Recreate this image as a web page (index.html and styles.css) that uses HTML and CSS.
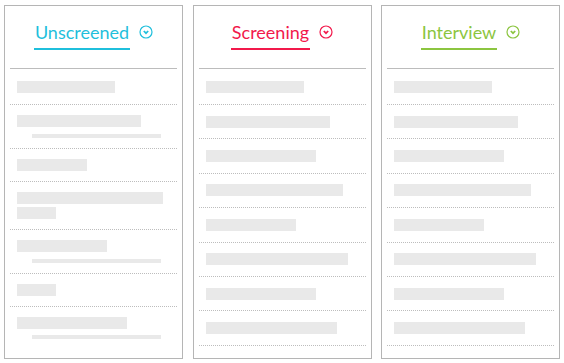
FILE: index.html
```html
<!DOCTYPE html>
<html lang="en">
<head>
    <meta charset="UTF-8">
    <title>Pipeline</title>
    <link rel="stylesheet" href="styles.css">
</head>
<body>
<div class="board">
    <div class="col unscreened">
        <div class="head">
            <div class="title">
                <span>Unscreened</span>
                <svg viewBox="0 0 14 14"><circle cx="7" cy="7" r="6"/><path d="M4.8 6 L7 8.2 L9.2 6"/></svg>
            </div>
        </div>
        <div class="row first"><i class="bar" style="width:98px"></i></div>
        <div class="row"><i class="bar" style="width:124px"></i><i class="sub"></i></div>
        <div class="row"><i class="bar" style="width:70px"></i></div>
        <div class="row"><i class="bar" style="width:146px"></i><i class="bar two" style="width:39px"></i></div>
        <div class="row"><i class="bar" style="width:90px"></i><i class="sub"></i></div>
        <div class="row"><i class="bar" style="width:39px"></i></div>
        <div class="row last"><i class="bar" style="width:110px"></i><i class="sub"></i></div>
    </div>
    <div class="col screening">
        <div class="head">
            <div class="title">
                <span>Screening</span>
                <svg viewBox="0 0 14 14"><circle cx="7" cy="7" r="6"/><path d="M4.8 6 L7 8.2 L9.2 6"/></svg>
            </div>
        </div>
        <div class="row first"><i class="bar" style="width:98px"></i></div>
        <div class="row"><i class="bar" style="width:124px"></i></div>
        <div class="row"><i class="bar" style="width:110px"></i></div>
        <div class="row"><i class="bar" style="width:137px"></i></div>
        <div class="row"><i class="bar" style="width:90px"></i></div>
        <div class="row"><i class="bar" style="width:142px"></i></div>
        <div class="row"><i class="bar" style="width:110px"></i></div>
        <div class="row"><i class="bar" style="width:131px"></i></div>
    </div>
    <div class="col interview">
        <div class="head">
            <div class="title">
                <span>Interview</span>
                <svg viewBox="0 0 14 14"><circle cx="7" cy="7" r="6"/><path d="M4.8 6 L7 8.2 L9.2 6"/></svg>
            </div>
        </div>
        <div class="row first"><i class="bar" style="width:98px"></i></div>
        <div class="row"><i class="bar" style="width:124px"></i></div>
        <div class="row"><i class="bar" style="width:110px"></i></div>
        <div class="row"><i class="bar" style="width:137px"></i></div>
        <div class="row"><i class="bar" style="width:90px"></i></div>
        <div class="row"><i class="bar" style="width:142px"></i></div>
        <div class="row"><i class="bar" style="width:110px"></i></div>
        <div class="row"><i class="bar" style="width:131px"></i></div>
    </div>
</div>
</body>
</html>
```

FILE: styles.css
```css
*{
    margin:0;
    padding:0;
    box-sizing:border-box;
}
body{
    margin:5px 4px;
    background:#fff;
    font-family:Lato,"Open Sans",sans-serif;
}
.board{
    display:flex;
    gap:9.5px;
}
.col{
    flex:1;
    height:354px;
    border:1px solid #b5b5b5;
    padding:0 5px;
}
.head{
    padding:15px 0 18px;
    border-bottom:1px solid #bcbcbc;
}
.title{
    display:flex;
    justify-content:center;
    align-items:flex-start;
    gap:9px;
}
.title span{
    font-size:18px;
    line-height:22px;
    padding:0 1px 5px;
    border-bottom:2px solid;
}
.title svg{
    width:14px;
    height:14px;
    margin-top:4px;
    fill:none;
    stroke:currentColor;
    stroke-width:1.2;
}
.title svg path{
    stroke-width:1.7;
}
.unscreened .title{color:#1fbfdc;}
.screening .title{color:#f2194b;}
.interview .title{color:#8cc540;}
.row{
    padding:10.7px 7px;
    border-bottom:1px dotted #bdbdbd;
}
.row.first{
    padding-top:12px;
    padding-bottom:11px;
}
.unscreened .row{
    padding-top:10px;
    padding-bottom:10.2px;
}
.unscreened .row.first{
    padding-top:12px;
    padding-bottom:11px;
}
.row.last{
    border-bottom:none;
}
.bar{
    display:block;
    height:12px;
    background:#e9e9e9;
}
.bar.two{
    margin-top:3px;
}
.sub{
    display:block;
    width:129px;
    height:4px;
    margin:6.5px 0 0 15px;
    background:#e9e9e9;
}
```
